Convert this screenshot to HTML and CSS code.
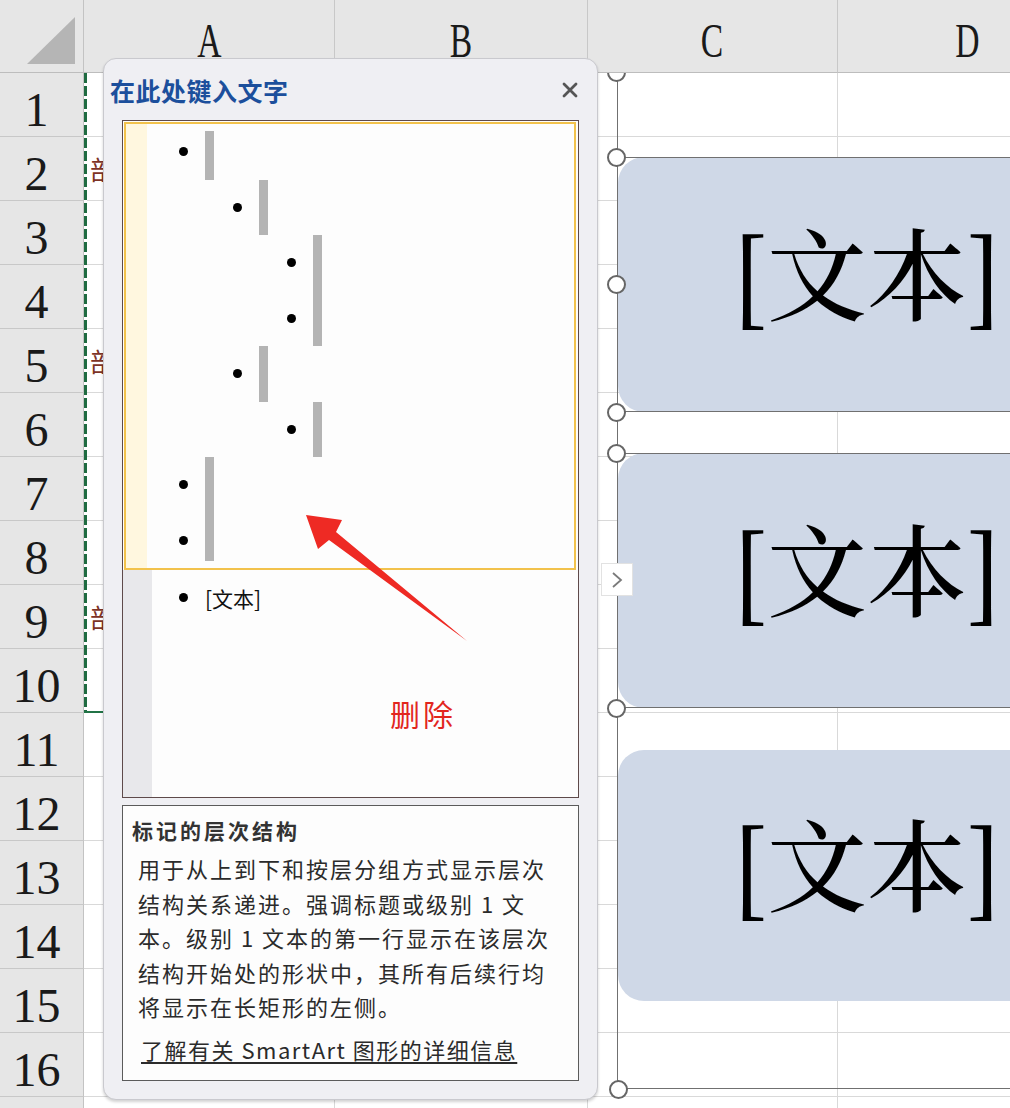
FILE: index.html
```html
<!DOCTYPE html>
<html lang="zh-CN">
<head>
<meta charset="utf-8">
<title>SmartArt 文本窗格</title>
<link rel="stylesheet" href="styles.css">
</head>
<body>
<div class="screen">
  <div class="sheet">
    <div class="corner"><span class="corner-tri"></span></div>
    <div class="colhead"><span class="hl">A</span></div>
    <div class="colhead"><span class="hl">B</span></div>
    <div class="colhead"><span class="hl">C</span></div>
    <div class="colhead"><span class="hl">D</span></div>

    <div class="rowhead">1</div><div class="cell"></div><div class="cell"></div><div class="cell"></div><div class="cell"></div>
    <div class="rowhead">2</div><div class="cell"><span class="ctext">部门</span></div><div class="cell"></div><div class="cell"></div><div class="cell"></div>
    <div class="rowhead">3</div><div class="cell"></div><div class="cell"></div><div class="cell"></div><div class="cell"></div>
    <div class="rowhead">4</div><div class="cell"></div><div class="cell"></div><div class="cell"></div><div class="cell"></div>
    <div class="rowhead">5</div><div class="cell"><span class="ctext">部门</span></div><div class="cell"></div><div class="cell"></div><div class="cell"></div>
    <div class="rowhead">6</div><div class="cell"></div><div class="cell"></div><div class="cell"></div><div class="cell"></div>
    <div class="rowhead">7</div><div class="cell"></div><div class="cell"></div><div class="cell"></div><div class="cell"></div>
    <div class="rowhead">8</div><div class="cell"></div><div class="cell"></div><div class="cell"></div><div class="cell"></div>
    <div class="rowhead">9</div><div class="cell"><span class="ctext">部门</span></div><div class="cell"></div><div class="cell"></div><div class="cell"></div>
    <div class="rowhead">10</div><div class="cell"></div><div class="cell"></div><div class="cell"></div><div class="cell"></div>
    <div class="rowhead">11</div><div class="cell"></div><div class="cell"></div><div class="cell"></div><div class="cell"></div>
    <div class="rowhead">12</div><div class="cell"></div><div class="cell"></div><div class="cell"></div><div class="cell"></div>
    <div class="rowhead">13</div><div class="cell"></div><div class="cell"></div><div class="cell"></div><div class="cell"></div>
    <div class="rowhead">14</div><div class="cell"></div><div class="cell"></div><div class="cell"></div><div class="cell"></div>
    <div class="rowhead">15</div><div class="cell"></div><div class="cell"></div><div class="cell"></div><div class="cell"></div>
    <div class="rowhead">16</div><div class="cell"></div><div class="cell"></div><div class="cell"></div><div class="cell"></div>
    <div class="rowhead"></div><div class="cell"></div><div class="cell"></div><div class="cell"></div><div class="cell"></div>
  </div>

  <div class="marquee"></div>

  <div class="smartart">
    <div class="node n1 selected"><span class="node-text">[文本]</span></div>
    <div class="node n2 selected"><span class="node-text">[文本]</span></div>
    <div class="node n3"><span class="node-text">[文本]</span></div>
    <span class="handle hd1"></span>
    <span class="handle hd2"></span>
    <span class="handle hd3"></span>
    <span class="handle hd4"></span>
    <span class="handle hd5"></span>
    <span class="handle hd6"></span>
    <span class="handle hd7"></span>
    <span class="expand"><svg width="12" height="18" viewBox="0 0 12 18"><polyline points="2,2 10,9 2,16" fill="none" stroke="#7a7a7a" stroke-width="1.8"/></svg></span>
  </div>

  <aside class="pane">
    <header class="pane-head">
      <span class="pane-title">在此处键入文字</span>
      <span class="pane-close"><svg width="16" height="16" viewBox="0 0 16 16"><path d="M2 2 L14 14 M14 2 L2 14" stroke="#555" stroke-width="2.8" stroke-linecap="round"/></svg></span>
    </header>
    <div class="textbox">
      <div class="sel-block">
        <div class="ln lv1 first"><span class="dot"></span><span class="bar"></span></div>
        <div class="ln lv2"><span class="dot"></span><span class="bar"></span></div>
        <div class="ln lv3"><span class="dot"></span><span class="bar"></span></div>
        <div class="ln lv3"><span class="dot"></span><span class="bar"></span></div>
        <div class="ln lv2"><span class="dot"></span><span class="bar"></span></div>
        <div class="ln lv3"><span class="dot"></span><span class="bar"></span></div>
        <div class="ln lv1"><span class="dot"></span><span class="bar"></span></div>
        <div class="ln lv1 last"><span class="dot"></span><span class="bar"></span></div>
      </div>
      <div class="rest-block">
        <div class="ln lv1 plain"><span class="dot"></span><span class="ln-text">[文本]</span></div>
      </div>
    </div>
    <div class="desc">
      <div class="desc-title">标记的层次结构</div>
      <div class="desc-body">
        <div>用于从上到下和按层分组方式显示层次</div>
        <div>结构关系递进。强调标题或级别 1 文</div>
        <div>本。级别 1 文本的第一行显示在该层次</div>
        <div>结构开始处的形状中，其所有后续行均</div>
        <div>将显示在长矩形的左侧。</div>
      </div>
      <div class="desc-link">了解有关 SmartArt 图形的详细信息</div>
    </div>
  </aside>

  <svg class="arrow" width="180" height="140" viewBox="0 0 180 140">
    <polygon points="11,10 47,15 41,27 172,136 34,35 23,44" fill="#ee2a24"/>
  </svg>
  <div class="annot-label">删除</div>
</div>
</body>
</html>
```

FILE: styles.css
```css
* { box-sizing: border-box; }
html, body { margin: 0; padding: 0; }
body {
  background: #fff;
  font-family: "Noto Sans CJK SC", "Noto Sans", sans-serif;
}
.screen {
  position: relative;
  width: 1010px;
  height: 1108px;
  overflow: hidden;
  background: #fff;
}

/* ---------- spreadsheet ---------- */
.sheet {
  display: grid;
  width: max-content;
  grid-template-columns: 84px 251px 253px 250px 260px;
  grid-template-rows: 73px repeat(17, 64px);
}
.corner {
  position: relative;
  z-index: 2;
  background: #e6e6e6;
  border-right: 1px solid #c3c3c3;
  border-bottom: 1px solid #bdbdbd;
  display: flex;
  justify-content: flex-end;
  align-items: flex-end;
  padding: 0 8px 8px 0;
}
.corner-tri {
  width: 48px;
  height: 47px;
  background: #b5b5b5;
  clip-path: polygon(100% 0, 100% 100%, 0 100%);
}
.colhead {
  position: relative;
  z-index: 2;
  background: #e6e6e6;
  border-right: 1px solid #c8c8c8;
  border-bottom: 1px solid #bdbdbd;
  display: flex;
  justify-content: center;
  align-items: center;
  padding-top: 10px;
  font-family: "Liberation Serif", serif;
  font-size: 48px;
  line-height: 1;
  color: #1a1a1a;
}
.hl { display: inline-block; transform: scaleX(0.7); }
.rowhead {
  background: #e6e6e6;
  border-right: 1px solid #c3c3c3;
  border-bottom: 1px solid #c8c8c8;
  display: flex;
  justify-content: center;
  align-items: center;
  padding: 10px 10px 0 0;
  font-family: "Liberation Serif", serif;
  font-size: 48px;
  line-height: 1;
  color: #1a1a1a;
}
.cell {
  border-right: 1px solid #d9d9d9;
  border-bottom: 1px solid #d9d9d9;
  display: flex;
  align-items: center;
  padding-left: 6px;
}
.ctext {
  font-size: 26px;
  color: #7d3326;
  white-space: nowrap;
}

/* copy marquee around A1:A10 */
.marquee {
  position: absolute;
  z-index: 1;
  left: 84px;
  top: 73px;
  width: 252px;
  height: 640px;
  border-bottom: 2px solid #217346;
  background: repeating-linear-gradient(to bottom, #1f6b41 0 10px, #ffffff 10px 13px) left top / 3px 100% no-repeat;
}

/* ---------- SmartArt canvas ---------- */
.smartart {
  position: absolute;
  z-index: 1;
  left: 617px;
  top: 72px;
  width: 600px;
  height: 1017px;
  border-left: 1.5px solid #707070;
  border-bottom: 1.5px solid #707070;
  padding-top: 85px;
  display: flex;
  flex-direction: column;
  gap: 41px;
}
.node {
  position: relative;
  flex: none;
  width: 498px;
  background: #cfd8e7;
  border-radius: 26px;
  display: flex;
  align-items: center;
  justify-content: center;
}
.n1, .n2 { height: 255px; }
.n3 { height: 251px; margin-top: 1px; }
.node.selected::before {
  content: "";
  position: absolute;
  left: -2px;
  right: -100px;
  top: 0;
  bottom: 0;
  border-top: 1.5px solid #707070;
  border-bottom: 1.5px solid #707070;
}
.node-text {
  font-family: "Noto Serif CJK SC", "Noto Sans CJK SC", serif;
  font-size: 100px;
  font-weight: 500;
  line-height: 1;
  color: #000;
  margin-top: -30px;
}
.handle {
  position: absolute;
  left: -11px;
  width: 19px;
  height: 19px;
  border-radius: 50%;
  border: 2px solid #666;
  background: #fff;
}
.hd1 { top: -9.5px; }
.hd2 { top: 75.5px; }
.hd3 { top: 202.5px; }
.hd4 { top: 330.5px; }
.hd5 { top: 371.5px; }
.hd6 { top: 626.5px; }
.hd7 { top: auto; bottom: -10.5px; left: -9px; }
.expand {
  position: absolute;
  left: -17px;
  top: 491px;
  width: 32px;
  height: 33px;
  background: #fff;
  border: 1px solid #e2e2e2;
  display: flex;
  align-items: center;
  justify-content: center;
}

/* ---------- text pane ---------- */
.pane {
  position: absolute;
  z-index: 4;
  left: 103px;
  top: 58px;
  width: 495px;
  height: 1042px;
  background: #efeff3;
  border: 1px solid #c9c9ce;
  border-radius: 13px;
  box-shadow: 0 2px 3px rgba(0, 0, 0, 0.18);
  display: flex;
  flex-direction: column;
}
.pane-head {
  height: 61px;
  flex: none;
  display: flex;
  align-items: center;
  justify-content: space-between;
  padding: 0 19px 0 6px;
}
.pane-title {
  font-size: 25px;
  font-weight: 700;
  letter-spacing: 0.5px;
  color: #1c4f9c;
}
.pane-close { display: flex; }

.textbox {
  flex: none;
  height: 678px;
  margin: 0 18px;
  border: 1px solid #5e4a4a;
  background: #fdfdfd;
  display: flex;
  flex-direction: column;
}
.sel-block {
  flex: none;
  margin: 1px 2px 0 1px;
  border: 2px solid #f2c24c;
  background: linear-gradient(to right, #fff7df 0 21px, #fdfdfd 21px);
}
.rest-block {
  flex: 1;
  background: linear-gradient(to right, #e8e8eb 0 29px, #fdfdfd 29px);
}
.ln {
  display: flex;
  align-items: center;
  height: 55.5px;
  gap: 17px;
}
.lv1 { padding-left: 53px; }
.lv2 { padding-left: 107px; }
.lv3 { padding-left: 161px; }
.dot {
  flex: none;
  width: 9px;
  height: 9px;
  border-radius: 50%;
  background: #000;
}
.bar {
  flex: none;
  align-self: stretch;
  width: 9px;
  background: #b4b4b4;
}
.first .bar { margin-top: 7px; }
.last .bar { margin-bottom: 7px; }
.ln.plain { padding-left: 56px; gap: 17px; }
.ln-text {
  font-size: 21px;
  color: #111;
}

.desc {
  flex: none;
  height: 276px;
  margin: 7px 18px 0;
  border: 1px solid #5b5b5b;
  background: #fdfdfd;
  padding: 9px 0 0 9px;
  color: #2b2b2b;
}
.desc-title {
  font-size: 21px;
  font-weight: 700;
  letter-spacing: 3px;
  line-height: 30px;
  color: #333;
}
.desc-body {
  margin: 6px 0 0 6px;
  font-size: 22px;
  letter-spacing: 2px;
  line-height: 34.5px;
  white-space: nowrap;
}
.desc-link {
  margin: 10px 0 0 9px;
  font-size: 22px;
  letter-spacing: 1.5px;
  line-height: 30px;
  text-decoration: underline;
  text-underline-offset: 3px;
  white-space: nowrap;
}

/* ---------- annotation ---------- */
.arrow {
  position: absolute;
  z-index: 5;
  left: 295px;
  top: 505px;
}
.annot-label {
  position: absolute;
  z-index: 5;
  left: 390px;
  top: 692px;
  font-size: 30px;
  letter-spacing: 3px;
  line-height: 42px;
  color: #e2261d;
}
```
